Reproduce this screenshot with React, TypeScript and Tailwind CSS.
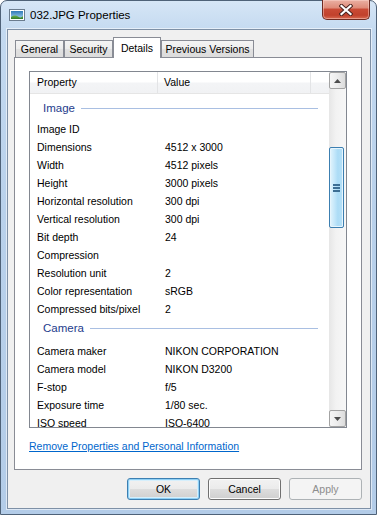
import React from "react";

const imageRows: [string, string][] = [
  ["Image ID", ""],
  ["Dimensions", "4512 x 3000"],
  ["Width", "4512 pixels"],
  ["Height", "3000 pixels"],
  ["Horizontal resolution", "300 dpi"],
  ["Vertical resolution", "300 dpi"],
  ["Bit depth", "24"],
  ["Compression", ""],
  ["Resolution unit", "2"],
  ["Color representation", "sRGB"],
  ["Compressed bits/pixel", "2"],
];

const cameraRows: [string, string][] = [
  ["Camera maker", "NIKON CORPORATION"],
  ["Camera model", "NIKON D3200"],
  ["F-stop", "f/5"],
  ["Exposure time", "1/80 sec."],
  ["ISO speed", "ISO-6400"],
];

function Row({ p, v }: { p: string; v: string }) {
  return (
    <div className="flex h-[18px] shrink-0 items-center whitespace-nowrap text-black">
      <div className="w-[128px] shrink-0 pl-[7px]">{p}</div>
      <div className="pl-[7px]">{v}</div>
    </div>
  );
}

function Group({ label, className }: { label: string; className: string }) {
  return (
    <div className={`flex shrink-0 items-center pl-[13px] pr-[11px] text-[#1e3c8c] ${className}`}>
      <span className="text-[11.5px]">{label}</span>
      <div className="ml-[6px] h-px flex-1 bg-[#a9bfe2]" />
    </div>
  );
}

function Tab({ label, w }: { label: string; w: string }) {
  return (
    <div
      className={`${w} flex h-[17px] items-center justify-center border-x border-t border-[#898c95] bg-[linear-gradient(180deg,#f4f4f4_0%,#ececec_50%,#e1e1e1_51%,#dcdcdc_100%)] pt-[1px] text-black`}
    >
      {label}
    </div>
  );
}

function Btn({ label, kind }: { label: string; kind: "default" | "normal" | "disabled" }) {
  const cls =
    kind === "disabled"
      ? "border-[#adb2b5] bg-[#f4f4f4] text-[#8d8d8d]"
      : kind === "default"
      ? "border-[#3c7fb1] bg-[linear-gradient(180deg,#f2f2f2_0%,#ebebeb_50%,#dddddd_51%,#cfcfcf_100%)] shadow-[inset_0_0_0_1px_#8fd0f5,inset_0_0_0_2px_#d6effc] text-black"
      : "border-[#707070] bg-[linear-gradient(180deg,#f2f2f2_0%,#ebebeb_50%,#dddddd_51%,#cfcfcf_100%)] shadow-[inset_0_0_0_1px_#fcfcfc] text-black";
  return (
    <div className={`flex h-[22px] w-[73px] items-center justify-center rounded-[3px] border ${cls}`}>
      {label}
    </div>
  );
}

export default function App() {
  return (
    <div className="h-[515px] w-[377px] overflow-hidden bg-[#ffffff] font-['Liberation_Sans','Arial',sans-serif] text-[10.5px] leading-[13px]">
      <div className="relative flex h-[515px] w-[377px] flex-col rounded-t-[7px] border border-[#4f6278] bg-[linear-gradient(180deg,#d6e6f6_0%,#c3d9f0_6%,#b9d1eb_40%,#b3cce8_100%)]">
        {/* Title bar */}
        <div className="flex h-[28px] shrink-0 items-center pl-[8px]">
          <svg width="16" height="14" viewBox="0 0 16 14" className="shrink-0">
            <defs>
              <linearGradient id="sky" x1="0" y1="0" x2="0" y2="1">
                <stop offset="0" stopColor="#2f79b8" />
                <stop offset="1" stopColor="#a9d6ee" />
              </linearGradient>
              <linearGradient id="hill" x1="0" y1="0" x2="0" y2="1">
                <stop offset="0" stopColor="#6ab04a" />
                <stop offset="1" stopColor="#2f7a2b" />
              </linearGradient>
            </defs>
            <rect x="0.5" y="1.5" width="15" height="11" fill="#ffffff" stroke="#6b7c8e" />
            <rect x="2" y="3" width="12" height="8" fill="url(#sky)" />
            <path d="M2 9 Q6 6.5 9 8.5 T14 8 V11 H2 Z" fill="url(#hill)" />
          </svg>
          <span className="ml-[5px] text-[11.5px] text-black">032.JPG Properties</span>
        </div>

        {/* Close button */}
        <div className="absolute left-[321px] top-[-1px] flex h-[20px] w-[48px] items-center justify-center rounded-b-[5px] border border-t-0 border-[#6f2b22] bg-[linear-gradient(180deg,#eab0a3_0%,#df8c7a_40%,#c94a35_50%,#c1412c_80%,#d86a52_100%)] shadow-[inset_0_0_0_1px_rgba(255,220,210,0.45)]">
          <svg width="14" height="12" viewBox="0 0 14 12">
            <path d="M2.5 2 L11.5 10 M11.5 2 L2.5 10" stroke="#4b2420" strokeWidth="4.2" strokeLinecap="square" />
            <path d="M2.5 2 L11.5 10 M11.5 2 L2.5 10" stroke="#ffffff" strokeWidth="2.2" strokeLinecap="square" />
          </svg>
        </div>

        {/* Client area */}
        <div className="mb-[5px] ml-[6px] mr-[5px] flex flex-1 flex-col border border-[#7e90a6] bg-[#f0f0f0] shadow-[0_0_0_1px_rgba(255,255,255,0.55)]">
          {/* Tabs */}
          <div className="flex h-[27px] shrink-0 items-end pl-[7px] pt-[7px]">
            <Tab label="General" w="w-[49px]" />
            <Tab label="Security" w="w-[49px]" />
            <div className="relative z-10 -mb-px flex h-[21px] w-[48px] items-start justify-center border-x border-t border-[#898c95] bg-white pt-[4px] text-black">
              Details
            </div>
            <Tab label="Previous Versions" w="w-[93px]" />
          </div>

          {/* Tab panel */}
          <div className="ml-[6px] mr-[8px] flex h-[413px] shrink-0 flex-col border border-[#898c95] bg-white">
            {/* List view */}
            <div className="ml-[14px] mt-[13px] flex h-[357px] w-[318px] shrink-0 border border-[#828790] bg-white">
              <div className="flex w-[299px] flex-col overflow-hidden">
                {/* Header */}
                <div className="flex h-[22px] shrink-0 items-center border-b border-[#e5e5e5] bg-[linear-gradient(180deg,#ffffff_0%,#ffffff_45%,#f3f4f6_55%,#f1f2f4_100%)] text-black">
                  <div className="flex h-full w-[128px] items-center border-r border-[#e3e4e6] pl-[7px]">Property</div>
                  <div className="flex h-full w-[153px] items-center border-r border-[#e3e4e6] pl-[6px]">Value</div>
                </div>
                <Group label="Image" className="h-[26px] pt-[2px]" />
                {imageRows.map(([p, v]) => (
                  <Row key={p} p={p} v={v} />
                ))}
                <Group label="Camera" className="mb-[5px] h-[19px] pt-[1px]" />
                {cameraRows.map(([p, v]) => (
                  <Row key={p} p={p} v={v} />
                ))}
              </div>
              {/* Scrollbar */}
              <div className="relative flex w-[17px] flex-col bg-[linear-gradient(90deg,#e6e6e6_0%,#f2f2f2_40%,#f7f7f7_100%)]">
                <div className="flex h-[17px] w-[17px] items-center justify-center rounded-[2px] border border-[#a3a3a3] bg-[linear-gradient(90deg,#f6f6f6_0%,#ececec_50%,#dcdcdc_100%)]">
                  <svg width="7" height="4" viewBox="0 0 7 4">
                    <path d="M0 4 L3.5 0 L7 4 Z" fill="#4d4d4d" />
                  </svg>
                </div>
                <div className="absolute left-0 top-[75px] flex h-[81px] w-[15px] flex-col items-center justify-center gap-[1px] rounded-[2px] border border-[#3c7fb1] bg-[linear-gradient(90deg,#e3f4fc_0%,#c4e7fa_35%,#acdcf6_60%,#b6e0f7_100%)] shadow-[inset_0_0_0_1px_#e6f5fd]">
                  <div className="h-[2px] w-[7px] border-y border-[#3c6e94] bg-[#cfe8f7]" />
                  <div className="h-[2px] w-[7px] border-y border-[#3c6e94] bg-[#cfe8f7]" />
                  <div className="h-[2px] w-[7px] border-y border-[#3c6e94] bg-[#cfe8f7]" />
                </div>
                <div className="mt-auto flex h-[17px] w-[17px] items-center justify-center rounded-[2px] border border-[#a3a3a3] bg-[linear-gradient(90deg,#f6f6f6_0%,#ececec_50%,#dcdcdc_100%)]">
                  <svg width="7" height="4" viewBox="0 0 7 4">
                    <path d="M0 0 L7 0 L3.5 4 Z" fill="#4d4d4d" />
                  </svg>
                </div>
              </div>
            </div>
            {/* Link */}
            <div className="ml-[14px] mt-[12px]">
              <span className="text-[#0066cc] underline underline-offset-[1px]">
                Remove Properties and Personal Information
              </span>
            </div>
          </div>

          {/* Buttons */}
          <div className="mt-[8px] flex justify-end gap-[8px] pr-[8px]">
            <Btn label="OK" kind="default" />
            <Btn label="Cancel" kind="normal" />
            <Btn label="Apply" kind="disabled" />
          </div>
        </div>
      </div>
    </div>
  );
}
